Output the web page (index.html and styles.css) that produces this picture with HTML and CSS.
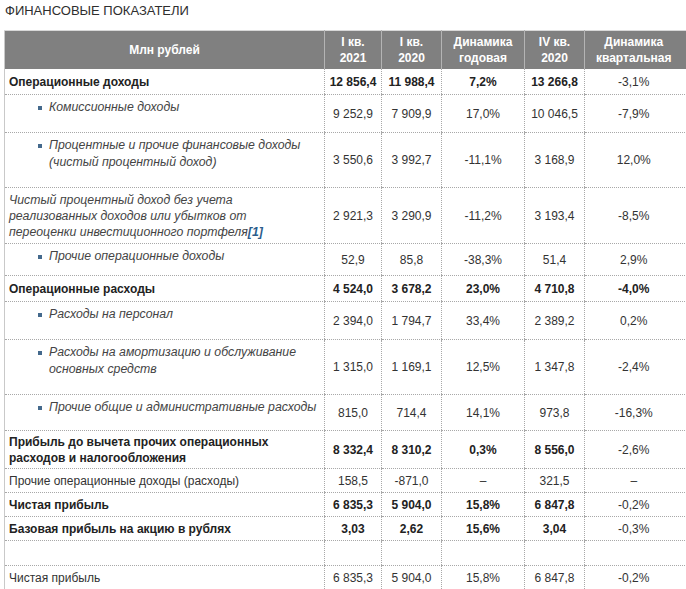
FILE: index.html
```html
<!DOCTYPE html>
<html lang="ru">
<head>
<meta charset="utf-8">
<title>Финансовые показатели</title>
<link rel="stylesheet" href="styles.css">
</head>
<body>
<h2 class="title">ФИНАНСОВЫЕ ПОКАЗАТЕЛИ</h2>
<table class="fin">
  <colgroup>
    <col class="c-label"><col class="c-a"><col class="c-b"><col class="c-c"><col class="c-d"><col class="c-e">
  </colgroup>
  <thead>
    <tr>
      <th>Млн рублей</th>
      <th>I кв.<br>2021</th>
      <th>I кв.<br>2020</th>
      <th>Динамика<br>годовая</th>
      <th>IV кв.<br>2020</th>
      <th>Динамика<br>квартальная</th>
    </tr>
  </thead>
  <tbody>
    <tr class="bold lead">
      <td>Операционные доходы</td><td>12 856,4</td><td>11 988,4</td><td>7,2%</td><td>13 266,8</td><td class="reg">-3,1%</td>
    </tr>
    <tr>
      <td><ul class="items"><li>Комиссионные доходы</li></ul></td><td>9 252,9</td><td>7 909,9</td><td>17,0%</td><td>10 046,5</td><td>-7,9%</td>
    </tr>
    <tr>
      <td><ul class="items"><li>Процентные и прочие финансовые доходы (чистый процентный доход)</li></ul></td><td>3 550,6</td><td>3 992,7</td><td>-11,1%</td><td>3 168,9</td><td>12,0%</td>
    </tr>
    <tr>
      <td class="it">Чистый процентный доход без учета реализованных доходов или убытков от переоценки инвестиционного портфеля<a class="fn" href="#">[1]</a></td><td>2 921,3</td><td>3 290,9</td><td>-11,2%</td><td>3 193,4</td><td>-8,5%</td>
    </tr>
    <tr>
      <td><ul class="items short"><li>Прочие операционные доходы</li></ul></td><td>52,9</td><td>85,8</td><td>-38,3%</td><td>51,4</td><td>2,9%</td>
    </tr>
    <tr class="bold lead">
      <td>Операционные расходы</td><td>4 524,0</td><td>3 678,2</td><td>23,0%</td><td>4 710,8</td><td>-4,0%</td>
    </tr>
    <tr>
      <td><ul class="items"><li>Расходы на персонал</li></ul></td><td>2 394,0</td><td>1 794,7</td><td>33,4%</td><td>2 389,2</td><td>0,2%</td>
    </tr>
    <tr>
      <td><ul class="items"><li>Расходы на амортизацию и обслуживание основных средств</li></ul></td><td>1 315,0</td><td>1 169,1</td><td>12,5%</td><td>1 347,8</td><td>-2,4%</td>
    </tr>
    <tr>
      <td><ul class="items mid"><li class="one-line">Прочие общие и административные расходы</li></ul></td><td>815,0</td><td>714,4</td><td>14,1%</td><td>973,8</td><td>-16,3%</td>
    </tr>
    <tr class="bold tight">
      <td>Прибыль до вычета прочих операционных расходов и налогообложения</td><td>8 332,4</td><td>8 310,2</td><td>0,3%</td><td>8 556,0</td><td class="reg">-2,6%</td>
    </tr>
    <tr>
      <td>Прочие операционные доходы (расходы)</td><td>158,5</td><td>-871,0</td><td>–</td><td>321,5</td><td>–</td>
    </tr>
    <tr class="bold">
      <td>Чистая прибыль</td><td>6 835,3</td><td>5 904,0</td><td>15,8%</td><td>6 847,8</td><td class="reg">-0,2%</td>
    </tr>
    <tr class="bold">
      <td>Базовая прибыль на акцию в рублях</td><td>3,03</td><td>2,62</td><td>15,6%</td><td>3,04</td><td class="reg">-0,3%</td>
    </tr>
    <tr class="empty">
      <td></td><td></td><td></td><td></td><td></td><td></td>
    </tr>
    <tr>
      <td>Чистая прибыль</td><td>6 835,3</td><td>5 904,0</td><td>15,8%</td><td>6 847,8</td><td>-0,2%</td>
    </tr>
  </tbody>
</table>
</body>
</html>
```
FILE: styles.css
```css
html, body {
  margin: 0;
  padding: 0;
  background: #ffffff;
}
body {
  padding: 0 0 0 4px;
  font-family: "Liberation Sans", Arial, sans-serif;
  font-size: 12px;
  color: #333333;
}
.title {
  margin: 0;
  padding: 2px 0 0 1px;
  height: 30px;
  box-sizing: border-box;
  font-size: 13px;
  font-weight: normal;
  line-height: 17px;
  color: #2e2e2e;
}
.fin {
  width: 682px;
  table-layout: fixed;
  border-collapse: collapse;
  border-left: 1px solid #c9c9c9;
  border-top: 1px solid #d8d8d8;
}
.c-label { width: 320px; }
.c-a { width: 57px; }
.c-b { width: 60px; }
.c-c { width: 83px; }
.c-d { width: 60px; }
.c-e { width: 102px; }

.fin th {
  background: #808080;
  color: #ffffff;
  font-weight: bold;
  line-height: 16px;
  padding: 2px 2px 1px;
  height: 38px;
  box-sizing: border-box;
  text-align: center;
  vertical-align: middle;
  border-left: 1px solid #b4b4b4;
}
.fin th:first-child { border-left: none; }
.fin th:last-child { padding-right: 6px; }

.fin td {
  padding: 4px 4px 3px;
  line-height: 16px;
  text-align: center;
  vertical-align: middle;
  border-bottom: 1px dotted #a8a8a8;
  border-left: 1px dotted #a8a8a8;
  white-space: nowrap;
}
.fin td:last-child { padding-right: 8px; }
.fin td:first-child {
  text-align: left;
  vertical-align: top;
  white-space: normal;
  border-left: none;
}
.fin tr.bold td { font-weight: bold; color: #222222; }
.fin tr.bold td:first-child { vertical-align: middle; }
.fin tr.bold td.reg { font-weight: normal; color: #333333; }
.fin tr.lead td { padding-top: 5px; padding-bottom: 4px; }
.fin tr.tight td { padding-top: 3px; padding-bottom: 2px; }
.fin tr.empty td { height: 17px; }

.fin td.it {
  font-style: italic;
  font-size: 12.3px;
  color: #444444;
  padding-right: 40px;
  padding-bottom: 3px;
}
.fn {
  color: #2b5d8c;
  font-weight: bold;
  text-decoration: none;
}
.items {
  list-style: none;
  margin: 0 0 13px;
  padding: 0 0 0 40px;
}
.items.short { margin-bottom: 7px; }
.items.mid { margin-bottom: 11px; }
.items li {
  position: relative;
  font-style: italic;
  font-size: 12.3px;
  line-height: 17px;
  color: #444444;
}
.items li.one-line { white-space: nowrap; }
.items li::before {
  content: "";
  position: absolute;
  left: -11px;
  top: 7px;
  width: 4px;
  height: 4px;
  background: #44698c;
}
```
